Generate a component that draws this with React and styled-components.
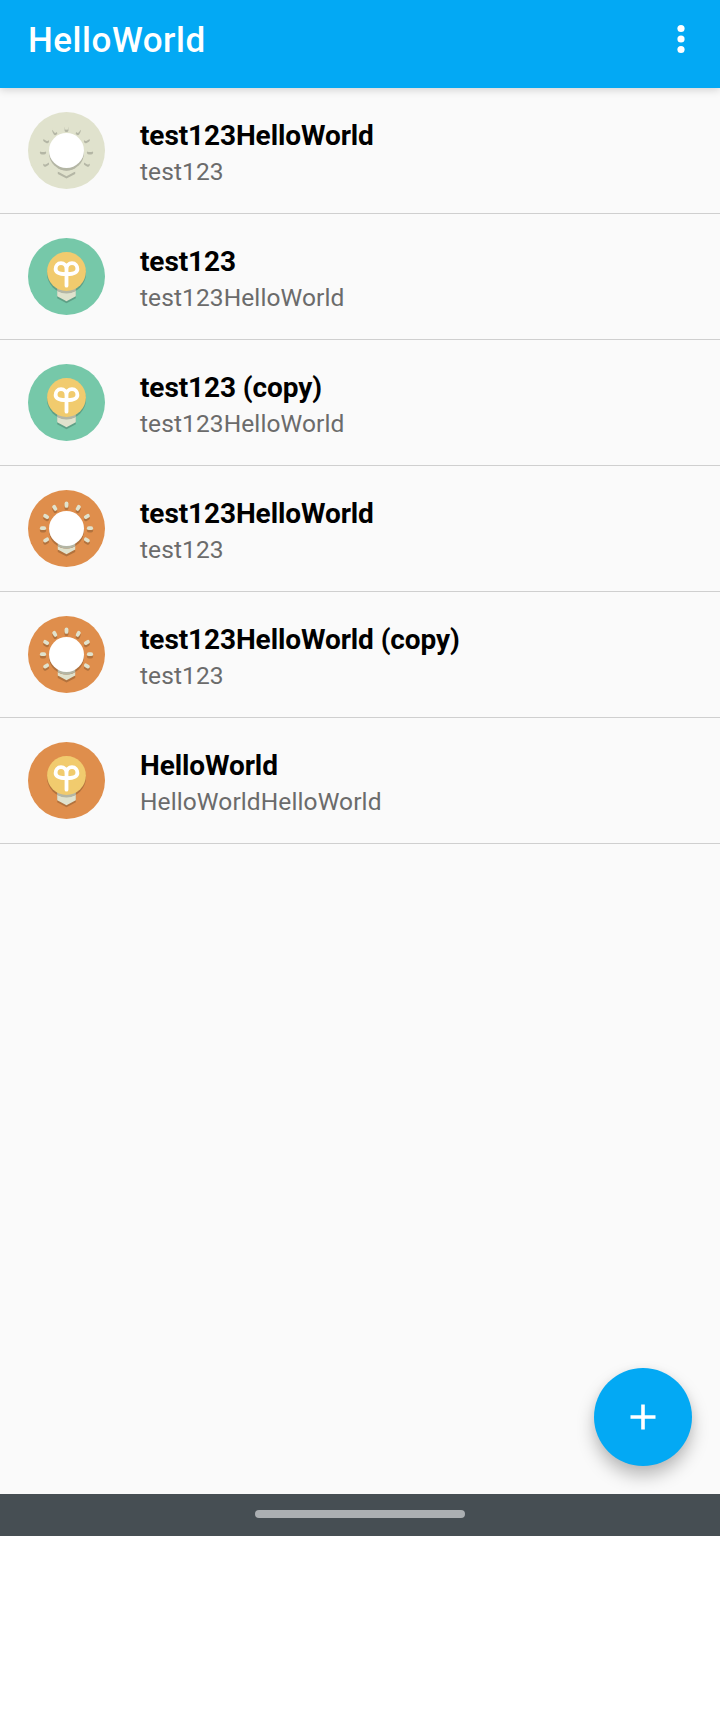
import React from "react";
import styled, { createGlobalStyle } from "styled-components";

const GlobalStyle = createGlobalStyle`
  * { box-sizing: border-box; }
  body {
    margin: 0;
    background: #ffffff;
    font-family: Roboto, "Liberation Sans", sans-serif;
  }
`;

const Page = styled.div`
  display: flex;
  flex-direction: column;
  width: 720px;
  height: 1712px;
`;

const AppBar = styled.header`
  position: relative;
  display: flex;
  align-items: center;
  justify-content: space-between;
  flex: none;
  height: 88px;
  padding: 0 28px 10px;
  background: #03a9f4;
  box-shadow: 0 2px 8px rgba(0, 0, 0, 0.16);
`;

const AppTitle = styled.h1`
  margin: 4px 0 0;
  font-size: 35px;
  line-height: 42px;
  font-weight: 500;
  letter-spacing: 0.52px;
  color: #ffffff;
`;

const MenuButton = styled.button`
  display: flex;
  padding: 0;
  border: 0;
  background: none;
`;

const Content = styled.main`
  display: flex;
  flex-direction: column;
  justify-content: space-between;
  height: 1406px;
  flex: none;
  background: #fafafa;
`;

const List = styled.ul`
  margin: 0;
  padding: 0;
  list-style: none;
`;

const Row = styled.li`
  display: flex;
  align-items: flex-start;
  gap: 35px;
  height: 126px;
  padding: 24px 28px 0;
  border-bottom: 1px solid #cfcfcf;
`;

const Labels = styled.div`
  display: flex;
  flex-direction: column;
  padding-top: 6px;
`;

const Name = styled.span`
  font-size: 28px;
  line-height: 36px;
  font-weight: 700;
  letter-spacing: -0.1px;
  color: #000000;
`;

const Detail = styled.span`
  font-size: 24.5px;
  line-height: 36px;
  letter-spacing: 0.1px;
  color: #6b6b6b;
`;

const AddButton = styled.button`
  display: flex;
  align-items: center;
  justify-content: center;
  align-self: flex-end;
  width: 98px;
  height: 98px;
  margin: 0 28px 28px;
  padding: 0;
  border: 0;
  border-radius: 50%;
  background: #03a9f4;
  box-shadow: 0 10px 17px rgba(0, 0, 0, 0.25), 0 1px 8px rgba(0, 0, 0, 0.05);
`;

const NavBar = styled.footer`
  position: relative;
  display: flex;
  justify-content: center;
  flex: none;
  height: 42px;
  padding-top: 16px;
  background: #464e53;
`;

const HomePill = styled.div`
  width: 210px;
  height: 8px;
  border-radius: 4px;
  background: #abafb2;
`;

const Bulb = styled.svg`
  display: block;
  flex: none;
`;

const BASE = "#e0e2cd";
const TONES = {
  idle: { disc: "#e0e2cd", shade: "#b4b6a5" },
  green: { disc: "#76c8a9", shade: "#5fa087" },
  orange: { disc: "#df8e4c", shade: "#b2723d" },
};

const RAYS = [-120, -90, -60, -30, 0, 30, 60, 90, 120];

function Rays({ color, dy = 0 }) {
  return (
    <g stroke={color} strokeWidth="3.8" strokeLinecap="round">
      {RAYS.map((deg) => {
        const a = (deg * Math.PI) / 180;
        const x = (r) => 38.5 + r * Math.sin(a);
        const y = (r) => 38.2 + dy - r * Math.cos(a);
        return <line key={deg} x1={x(22.3)} y1={y(22.3)} x2={x(24.7)} y2={y(24.7)} />;
      })}
    </g>
  );
}

function BulbIcon({ tone, sprout }) {
  const { disc, shade } = TONES[tone];
  return (
    <Bulb width="77" height="77" viewBox="0 0 77 77">
      <circle cx="38.5" cy="38.5" r="38.5" fill={disc} />
      {sprout ? (
        <>
          <path d="M29.2 48H47.8V60.2L38.5 65.2L29.2 60.2Z" fill={shade} />
          <path d="M29.2 48H47.8V58.3L38.5 63.2L29.2 58.3Z" fill={BASE} />
          <circle cx="38.5" cy="35.7" r="19.4" fill={shade} />
          <path d="M29.2 48H47.8V52.9A19.4 19.4 0 0 1 29.2 52.9Z" fill="#b4b6a5" />
          <circle cx="38.5" cy="33.5" r="19.4" fill="#f1cb6e" />
          <path
            d="M38.5 47.7V31C38.5 27.3 36.2 25.2 33 25.2C29.6 25.2 27.6 27.9 27.6 31C27.6 35 31.5 36.2 38.5 36.2C45.5 36.2 49.4 35 49.4 31C49.4 27.9 47.4 25.2 44 25.2C40.8 25.2 38.5 27.3 38.5 31"
            fill="none"
            stroke="#fff"
            strokeWidth="3.8"
            strokeLinecap="round"
            strokeLinejoin="round"
          />
        </>
      ) : (
        <>
          <Rays color={shade} dy={2.3} />
          <Rays color={BASE} />
          <path d="M29.8 59.8V61.9L38.5 66.5L47.2 61.9V59.8Z" fill={shade} />
          <path d="M29.8 50H47.2V59.6L38.5 64.2L29.8 59.6Z" fill={BASE} />
          <circle cx="38.5" cy="41" r="17.5" fill={shade} />
          <path d="M29.8 50H47.2V56.2A17.5 17.5 0 0 1 29.8 56.2Z" fill="#b4b6a5" />
          <circle cx="38.5" cy="38.5" r="17.5" fill="#fff" />
        </>
      )}
    </Bulb>
  );
}

const DEVICES = [
  { name: "test123HelloWorld", detail: "test123", tone: "idle" },
  { name: "test123", detail: "test123HelloWorld", tone: "green", sprout: true },
  { name: "test123 (copy)", detail: "test123HelloWorld", tone: "green", sprout: true },
  { name: "test123HelloWorld", detail: "test123", tone: "orange" },
  { name: "test123HelloWorld (copy)", detail: "test123", tone: "orange" },
  { name: "HelloWorld", detail: "HelloWorldHelloWorld", tone: "orange", sprout: true },
];

export default function App() {
  return (
    <Page>
      <GlobalStyle />
      <AppBar>
        <AppTitle>HelloWorld</AppTitle>
        <MenuButton aria-label="More options">
          <svg width="22" height="30" viewBox="0 0 22 30" fill="#fff">
            <circle cx="11" cy="4.5" r="3.6" />
            <circle cx="11" cy="15" r="3.6" />
            <circle cx="11" cy="25.5" r="3.6" />
          </svg>
        </MenuButton>
      </AppBar>
      <Content>
        <List>
          {DEVICES.map((d, i) => (
            <Row key={i}>
              <BulbIcon tone={d.tone} sprout={d.sprout} />
              <Labels>
                <Name>{d.name}</Name>
                <Detail>{d.detail}</Detail>
              </Labels>
            </Row>
          ))}
        </List>
        <AddButton aria-label="Add">
          <svg width="26" height="26" viewBox="0 0 26 26" fill="#fff">
            <path d="M11.2 0.5H14.8V11.2H25.5V14.8H14.8V25.5H11.2V14.8H0.5V11.2H11.2Z" />
          </svg>
        </AddButton>
      </Content>
      <NavBar>
        <HomePill />
      </NavBar>
    </Page>
  );
}
